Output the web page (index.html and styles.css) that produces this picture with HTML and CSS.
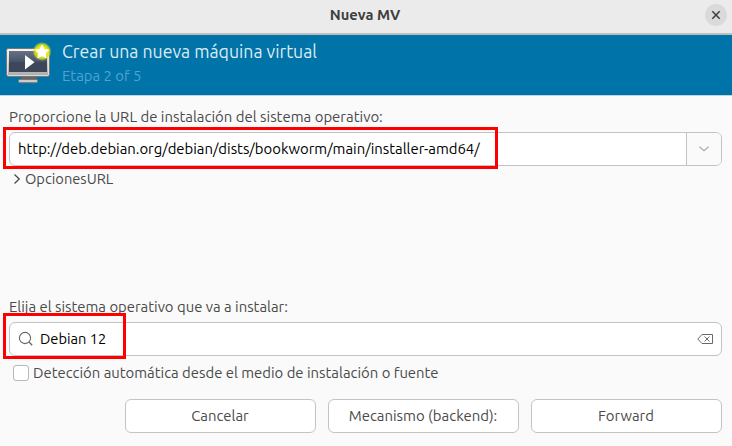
FILE: index.html
```html
<!DOCTYPE html>
<html lang="es">
<head>
<meta charset="utf-8">
<title>Nueva MV</title>
<link rel="stylesheet" href="styles.css">
</head>
<body>
<div class="window">
  <header class="titlebar">
    <h1 class="title">Nueva MV</h1>
    <button class="close" aria-label="Cerrar">
      <svg width="10" height="10" viewBox="0 0 10 10"><path d="M1.300 1.300l7.400 7.400M8.700 1.300L1.300 8.700" stroke="#3d3d3d" stroke-width="1.500"/></svg>
    </button>
  </header>
  <section class="banner">
    <svg class="vm-icon" width="48" height="48" viewBox="0 0 48 48">
      <defs>
        <linearGradient id="frame" x1="0" y1="0" x2="0" y2="1"><stop offset="0" stop-color="#fafafa"/><stop offset="1" stop-color="#aaa"/></linearGradient>
        <linearGradient id="screen" x1="0" y1="0" x2="0" y2="1"><stop offset="0" stop-color="#667183"/><stop offset=".5" stop-color="#485468"/><stop offset=".55" stop-color="#3c4759"/><stop offset="1" stop-color="#3c4759"/></linearGradient>
        <radialGradient id="glow"><stop offset=".5" stop-color="#f1f000"/><stop offset=".75" stop-color="#d8df16" stop-opacity=".85"/><stop offset="1" stop-color="#d8df16" stop-opacity="0"/></radialGradient>
      </defs>
      <path d="M16 34h14l1 4H15z" fill="#666"/>
      <rect x="12.500" y="37.500" width="19" height="3.200" rx="1.200" fill="#ccc" stroke="#777"/>
      <rect x=".5" y="6.500" width="43" height="28" rx="2" fill="url(#frame)" stroke="#777"/>
      <rect x="1.500" y="7.500" width="41" height="26" rx="1" fill="none" stroke="#eee" opacity=".7"/>
      <rect x="3" y="9" width="38" height="21" fill="url(#screen)"/>
      <path d="M19 13v14.500l9.500-7.200z" fill="#fff"/>
      <circle cx="36" cy="9.500" r="9.600" fill="url(#glow)"/>
      <path d="M36 3.200l2 4.200 4.600.6-3.400 3.200.9 4.600-4.100-2.200-4.100 2.200.9-4.600-3.400-3.200 4.600-.6z" fill="#fff" stroke="#fff" stroke-linejoin="round"/>
    </svg>
    <div class="banner-text">
      <h2 class="heading">Crear una nueva máquina virtual</h2>
      <p class="step">Etapa 2 of 5</p>
    </div>
  </section>
  <main class="content">
    <label class="label label-url">Proporcione la URL de instalación del sistema operativo:</label>
    <div class="field">
      <span class="value url">http://deb.debian.org/debian/dists/bookworm/main/installer-amd64/</span>
      <span class="dropdown"><svg width="12" height="8" viewBox="0 0 12 8"><path d="M1.500 1.800L6 5.800l4.500-4" fill="none" stroke="#aaa" stroke-width="1.200"/></svg></span>
      <i class="mark mark-url"></i>
    </div>
    <div class="expander">
      <svg width="8" height="12" viewBox="0 0 8 12"><path d="M1.500 1.500L6.200 6l-4.700 4.500" fill="none" stroke="#4a4a4a" stroke-width="1.300"/></svg>
      <span class="options">OpcionesURL</span>
    </div>
    <label class="label label-os">Elija el sistema operativo que va a instalar:</label>
    <div class="field search">
      <svg width="16" height="16" viewBox="0 0 16 16"><circle cx="7" cy="7" r="5.600" fill="none" stroke="#666" stroke-width="1.100"/><path d="M11 11l3.200 3.200" stroke="#666" stroke-width="1.300"/></svg>
      <span class="value os">Debian 12</span>
      <svg width="16" height="12" viewBox="0 0 16 12"><path d="M5 1.500h10.500v9H5L.8 6zM7.500 3.500l5 5M12.500 3.500l-5 5" fill="none" stroke="#696969"/></svg>
      <i class="mark mark-os"></i>
    </div>
    <label class="check"><span class="box"></span><span class="detect">Detección automática desde el medio de instalación o fuente</span></label>
    <footer class="actions">
      <button class="button cancel">Cancelar</button>
      <button class="button backend">Mecanismo (backend):</button>
      <button class="button forward">Forward</button>
    </footer>
  </main>
</div>
</body>
</html>
```
FILE: styles.css
```css
* { box-sizing: border-box; }
body { margin: 0; font-family: Ubuntu, "Noto Sans", sans-serif; font-size: 14.87px; color: #4a4a4a; background: #fafafa; }
h1, h2, p { margin: 0; font-weight: 400; }
svg { display: block; flex: none; }
.window { height: 446px; overflow: hidden; white-space: nowrap; background: #fafafa; }
.titlebar { display: grid; grid-template-columns: 1fr auto 1fr; align-items: center; height: 35px; padding: 0 5px 3px; background: #ebebeb; border-bottom: 2px solid #bdbdbd; }
.title { grid-column: 2; margin-right: 2px; font-size: 14.7px; font-weight: 700; line-height: 20px; color: #3d3d3d; }
.close { justify-self: end; display: grid; place-items: center; width: 22px; height: 22px; padding: 0; border: 0; border-radius: 50%; background: #dadada; }
.banner { display: flex; height: 61px; padding: 5px 6px 0; gap: 8px; background: #0073a9; border-bottom: 1px solid #c4d3dc; }
.vm-icon { margin-top: 2px; }
.heading { font-size: 17.7px; line-height: 24px; color: #dcecf4; }
.step { line-height: 24px; color: #4fa3d3; }
.content { display: flex; flex-direction: column; padding: 10px 10px 0 9px; }
.label { height: 26px; line-height: 22px; }
.label-url { font-size: 14.93px; }
.field { position: relative; display: flex; align-items: center; height: 34px; padding-left: 8px; background: #fff; border: 1px solid #c3c3c3; border-radius: 6px; }
.value { flex: 1; line-height: 20px; color: #000; }
.os { font-size: 14.67px; }
.dropdown { display: grid; place-items: center; align-self: stretch; width: 35px; background: #fafafa; border-left: 1px solid #c3c3c3; border-radius: 0 5px 5px 0; }
.mark { position: absolute; border: 3px solid #f00; }
.mark-url { left: -7px; top: -6px; width: 495px; height: 42px; }
.mark-os { left: -7px; top: -10px; width: 123px; height: 46px; }
.expander { display: flex; align-items: center; gap: 4px; height: 26px; padding-left: 4px; }
.options, .detect { line-height: 18px; }
.options { font-size: 14.67px; }
.label-os { margin-top: 104px; }
.search { padding: 0 8px; gap: 6px; }
.check { display: flex; align-items: center; gap: 4px; height: 34px; padding-left: 4px; }
.box { width: 16px; height: 16px; background: #fff; border: 1px solid #b8b8b8; border-radius: 3px; }
.actions { display: flex; gap: 12px; margin: 9px 0 0 116px; }
.button { flex: 1 1 0; height: 34px; padding: 0 1px 2px 0; background: #fff; border: 1px solid #c3c3c3; border-radius: 6px; font: inherit; color: #4a4a4a; }
.backend { font-size: 14.93px; }
```
